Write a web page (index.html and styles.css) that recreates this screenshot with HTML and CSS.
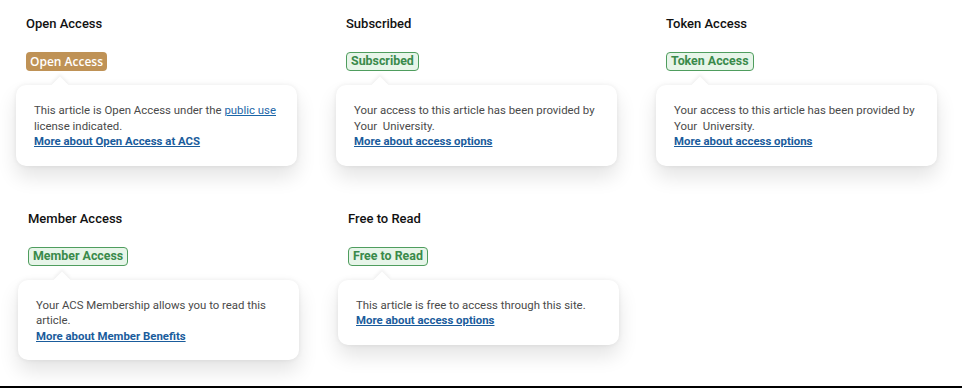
FILE: index.html
```html
<!DOCTYPE html>
<html lang="en">
<head>
<meta charset="utf-8">
<title>Access badges</title>
<link rel="stylesheet" href="styles.css">
</head>
<body>
<div class="page">
  <div class="row">
    <section class="cell">
      <h2 class="title">Open Access</h2>
      <span class="badge badge-oa">Open Access</span>
      <div class="tip">
        <p>This article is Open Access under the <a href="#" class="inline">public use</a> license indicated.</p>
        <a href="#" class="more">More about Open Access at ACS</a>
      </div>
    </section>
    <section class="cell">
      <h2 class="title">Subscribed</h2>
      <span class="badge badge-green">Subscribed</span>
      <div class="tip">
        <p>Your access to this article has been provided by Your&nbsp; University.</p>
        <a href="#" class="more">More about access options</a>
      </div>
    </section>
    <section class="cell">
      <h2 class="title">Token Access</h2>
      <span class="badge badge-green">Token Access</span>
      <div class="tip">
        <p>Your access to this article has been provided by Your&nbsp; University.</p>
        <a href="#" class="more">More about access options</a>
      </div>
    </section>
  </div>
  <div class="row row-second">
    <section class="cell">
      <h2 class="title">Member Access</h2>
      <span class="badge badge-green">Member Access</span>
      <div class="tip">
        <p>Your ACS Membership allows you to read this article.</p>
        <a href="#" class="more">More about Member Benefits</a>
      </div>
    </section>
    <section class="cell">
      <h2 class="title">Free to Read</h2>
      <span class="badge badge-green">Free to Read</span>
      <div class="tip">
        <p>This article is free to access through this site.</p>
        <a href="#" class="more">More about access options</a>
      </div>
    </section>
  </div>
</div>
</body>
</html>
```

FILE: styles.css
```css
* { box-sizing: border-box; }

html, body {
  margin: 0;
  padding: 0;
  background: #ffffff;
}

body {
  font-family: Roboto, "Liberation Sans", Arial, sans-serif;
  width: 962px;
  height: 388px;
  overflow: hidden;
}

.page {
  height: 388px;
  border-bottom: 2px solid #000;
  display: flex;
  flex-direction: column;
  gap: 29px;
}

.row {
  display: flex;
  align-items: flex-start;
  gap: 39px;
  padding-left: 16px;
}

.row-second {
  padding-left: 18px;
}

.cell {
  width: 281px;
  display: flex;
  flex-direction: column;
  align-items: flex-start;
}

.title {
  margin: 16px 0 0 10px;
  font-size: 13px;
  line-height: 16px;
  font-weight: 500;
  color: #111;
}

.badge {
  margin: 20px 0 0 10px;
  height: 19px;
  display: inline-flex;
  align-items: center;
  padding: 0 4px;
  border-radius: 4px;
  font-size: 12px;
  line-height: 1;
}

.badge-oa {
  background: #bf9256;
  color: #fff;
  font-family: "Open Sans", "Noto Sans", sans-serif;
  font-weight: 600;
  font-size: 12px;
  padding: 0 4px;
}

.badge-green {
  background: #e7f5e9;
  border: 1px solid #4f9d5e;
  color: #3a8a4b;
  font-weight: 700;
  font-size: 12.4px;
  padding: 0 4px;
}

.tip {
  position: relative;
  margin-top: 14px;
  width: 281px;
  background: #fff;
  border-radius: 10px;
  padding: 18px 18px 16px 18px;
  box-shadow: 0 11px 20px rgba(0, 0, 0, 0.11), 0 0 5px rgba(0, 0, 0, 0.07);
}

.tip::before {
  content: "";
  position: absolute;
  top: -6px;
  left: 38px;
  width: 12px;
  height: 12px;
  background: #fff;
  transform: rotate(45deg);
  box-shadow: -2px -2px 3px rgba(0, 0, 0, 0.05);
}

.tip p {
  position: relative;
  margin: 0;
  font-size: 11.4px;
  line-height: 15.5px;
  color: #4a4a4a;
}

.inline {
  color: #1b66a8;
  text-decoration: underline;
}

.more {
  position: relative;
  display: block;
  font-size: 11.4px;
  line-height: 15.5px;
  font-weight: 700;
  color: #1a5c9c;
  text-decoration: underline;
}
```
